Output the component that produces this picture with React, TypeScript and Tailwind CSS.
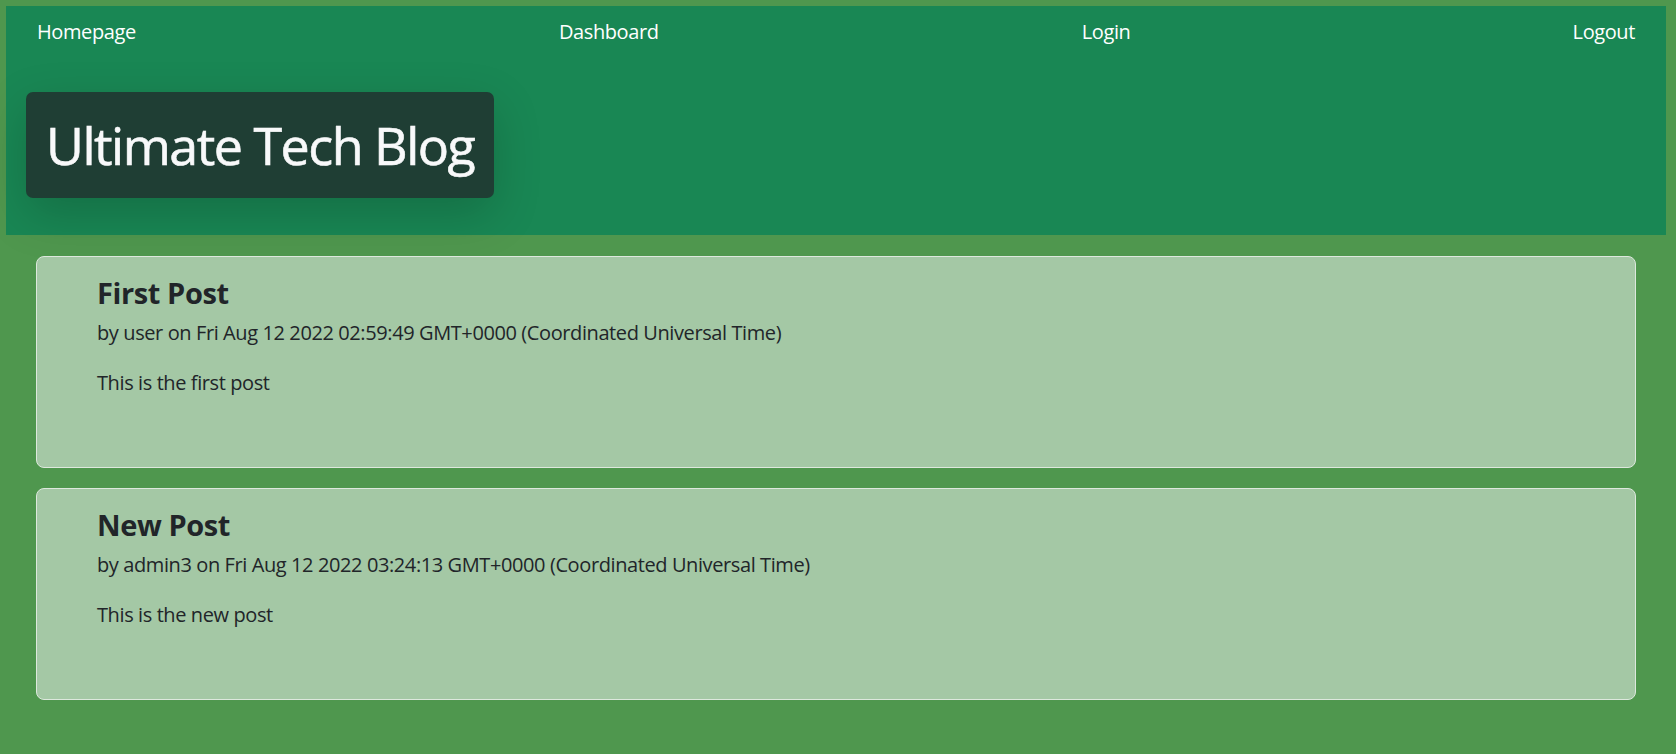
import React from 'react';

interface Post {
  title: string;
  author: string;
  date: string;
  body: string;
}

const posts: Post[] = [
  {
    title: 'First Post',
    author: 'user',
    date: 'Fri Aug 12 2022 02:59:49 GMT+0000 (Coordinated Universal Time)',
    body: 'This is the first post',
  },
  {
    title: 'New Post',
    author: 'admin3',
    date: 'Fri Aug 12 2022 03:24:13 GMT+0000 (Coordinated Universal Time)',
    body: 'This is the new post',
  },
];

const links = ['Homepage', 'Dashboard', 'Login', 'Logout'];

const App = () => {
  return (
    <div className="min-h-screen bg-[#4f974e] pt-[6px] pl-[6px] pr-[10px] font-['Open_Sans',sans-serif]">
      <header className="bg-[#198754] px-[20px] pt-[11px] pb-[37px]">
        <nav className="flex justify-between px-[11px] text-[20px] leading-[30px] tracking-[-0.4px] text-white">
          {links.map((link) => (
            <a key={link} href="#" className={link === 'Logout' ? 'block pl-[19px]' : 'block'}>
              {link}
            </a>
          ))}
        </nav>
        <div className="mt-[45px] inline-block rounded-[7px] bg-[#1f3e34] px-[20px] py-[22px] shadow-[0_16px_48px_rgba(0,0,0,0.18)]">
          <h1 className="text-[52px] leading-[62px] font-normal tracking-[-1.5px] text-[#f8f9fa] [-webkit-text-stroke:0.6px_#f8f9fa]">
            Ultimate Tech Blog
          </h1>
        </div>
      </header>

      <main className="flex flex-col gap-[20px] px-[30px] pt-[21px] pb-[40px]">
        {posts.map((post) => (
          <section
            key={post.title}
            className="h-[212px] rounded-[8px] border border-[#dde8dd] bg-[#a4c8a5] pl-[60px] pt-[18px] text-[#212529]"
          >
            <h2 className="text-[29px] leading-[35px] font-bold tracking-[-0.4px]">{post.title}</h2>
            <p className="mt-[8px] text-[20px] leading-[30px] tracking-[-0.4px]">
              by {post.author} on {post.date}
            </p>
            <p className="mt-[20px] text-[20px] leading-[30px] tracking-[-0.4px]">{post.body}</p>
          </section>
        ))}
      </main>
    </div>
  );
};

export default App;
